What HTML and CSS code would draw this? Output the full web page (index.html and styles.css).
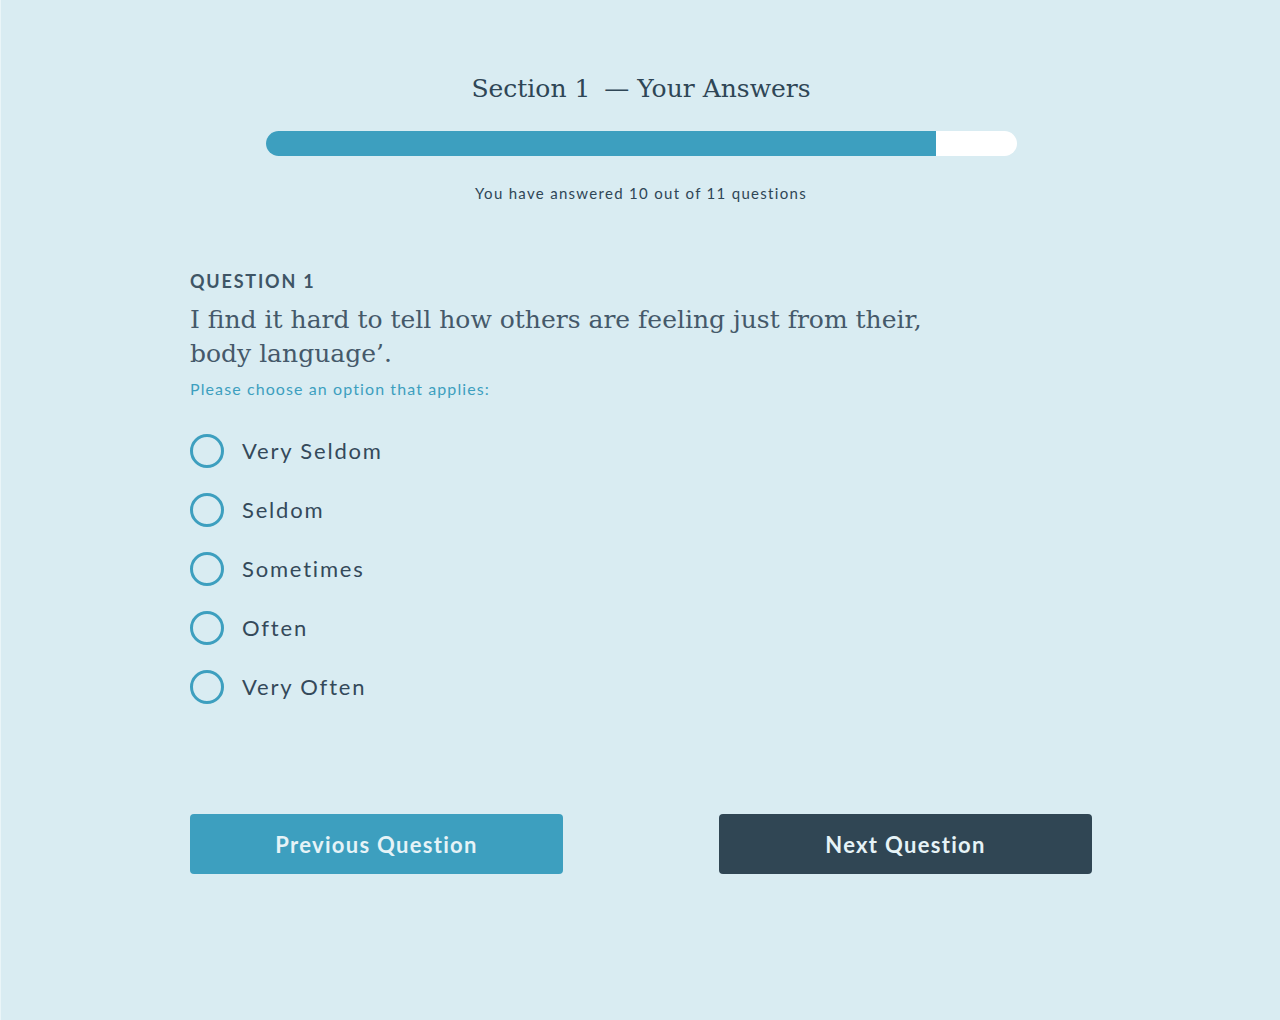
FILE: index.html
```html
<!DOCTYPE html>
<html lang="en">
<head>
    <meta charset="UTF-8">
    <meta name="viewport" content="width=device-width, initial-scale=1.0">
    <title>Section 1 - Your Answers</title>
    <link rel="stylesheet" href="styles.css">
</head>
<body>

<div class="page">
    <div class="quiz">
        <!-- Ust kisim: baslik ve ilerleme -->
        <div class="progress-head">
            <h1 class="section-title">Section 1 <span class="dash">—</span> Your Answers</h1>
            <div class="progress-bar">
                <div class="progress-fill" style="width: 89.3%"></div>
            </div>
            <p class="progress-text">You have answered 10 out of 11 questions</p>
        </div>

        <!-- Soru -->
        <div class="question">
            <h2 class="question-label">QUESTION 1</h2>
            <p class="question-text">I find it hard to tell how others are feeling just from their, body language’.</p>
            <p class="question-hint">Please choose an option that applies:</p>

            <div class="options">
                <label class="option"><span class="radio"></span>Very Seldom</label>
                <label class="option"><span class="radio"></span>Seldom</label>
                <label class="option"><span class="radio"></span>Sometimes</label>
                <label class="option"><span class="radio"></span>Often</label>
                <label class="option"><span class="radio"></span>Very Often</label>
            </div>
        </div>

        <!-- Butonlar -->
        <div class="nav-buttons">
            <button class="btn prev">Previous Question</button>
            <button class="btn next">Next Question</button>
        </div>
    </div>
</div>

</body>
</html>
```

FILE: styles.css
```css
/* Genel */
body {
    margin: 0;
    font-family: 'Lato', sans-serif;
    color: #2f4656;
}

.page {
    background: #d9ecf2;
    height: 1020px;
    box-sizing: border-box;
    border-left: 1px solid #eaf5f8;
    padding-top: 71px;
}

.quiz {
    width: 902px;
    margin: 0 auto;
    padding-left: 1px;
}

/* Ilerleme */
.progress-head {
    text-align: center;
}

.section-title {
    font-family: 'DejaVu Serif', serif;
    font-weight: normal;
    font-size: 25px;
    line-height: 36px;
    margin: 0;
    color: #2f4656;
}

.section-title .dash {
    margin-left: 6px;
}

.progress-bar {
    width: 751px;
    height: 25px;
    margin: 24px auto 0;
    background: #fff;
    border-radius: 13px;
    overflow: hidden;
}

.progress-fill {
    height: 100%;
    background: #3d9fbf;
}

.progress-text {
    font-size: 15px;
    line-height: 20px;
    margin: 27px 0 0;
    letter-spacing: 1.3px;
}

/* Soru */
.question-label {
    font-size: 18px;
    line-height: 22px;
    font-weight: bold;
    letter-spacing: 1.8px;
    margin: 67px 0 0;
    color: #3e5566;
}

.question-text {
    font-family: 'DejaVu Serif', serif;
    font-size: 25px;
    line-height: 34px;
    margin: 11px 0 0;
    max-width: 760px;
    color: #45596a;
}

.question-hint {
    font-size: 16px;
    line-height: 20px;
    margin: 8px 0 0;
    color: #3d9fbf;
    letter-spacing: 1.1px;
}

.options {
    margin-top: 35px;
    display: flex;
    flex-direction: column;
    gap: 25px;
}

.option {
    display: flex;
    align-items: center;
    gap: 18px;
    height: 34px;
    font-size: 22px;
    line-height: 32px;
    letter-spacing: 1.8px;
    color: #34495a;
    cursor: pointer;
}

.radio {
    width: 28px;
    height: 28px;
    border: 3px solid #3d9fbf;
    border-radius: 50%;
    flex-shrink: 0;
}

/* Butonlar */
.nav-buttons {
    margin-top: 110px;
    display: flex;
    justify-content: space-between;
}

.btn {
    width: 373px;
    height: 60px;
    border: none;
    border-radius: 4px;
    font-family: 'Lato', sans-serif;
    font-size: 22px;
    font-weight: bold;
    letter-spacing: 1.3px;
    color: #e6f3f7;
    cursor: pointer;
}

.btn.prev {
    background: #3d9fbf;
}

.btn.next {
    background: #304654;
}
```
